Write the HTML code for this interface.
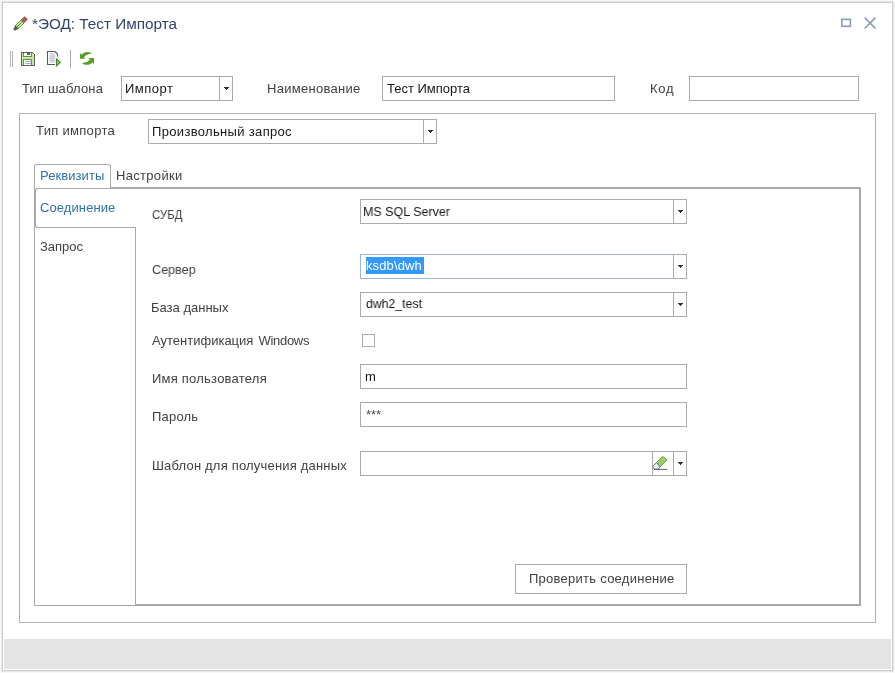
<!DOCTYPE html>
<html lang="ru">
<head>
<meta charset="utf-8">
<title>ЭОД: Тест Импорта</title>
<style>
html,body{margin:0;padding:0;}
body{width:895px;height:673px;overflow:hidden;background:#f9f9f9;position:relative;
 font-family:"Liberation Sans",sans-serif;font-size:13px;color:#414141;}
.abs,.t,.box,.ln{position:absolute;box-sizing:border-box;}
.t{white-space:nowrap;line-height:21px;height:21px;transform-origin:0 50%;will-change:transform;}
.win{left:2px;top:2px;width:891px;height:669px;border:1px solid #cecece;background:#fff;box-shadow:0 0 0 1px #e7e7e7;}
.status{left:4px;top:639px;width:887px;height:30px;background:#e4e4e4;}
.box{border:1px solid #ababab;background:#fff;}
.ln{background:#a9a9a9;}
.dd{position:absolute;right:0;top:0;bottom:0;width:12px;border-left:1px solid #ababab;}
.dd:after{content:"";position:absolute;left:6px;top:12px;width:1px;height:1px;background:#333;box-shadow:-1px -1px #333,0 -1px #333,1px -1px #333,-2px -2px #333,-1px -2px #333,0 -2px #333,1px -2px #333,2px -2px #333;}
.val{color:#161616;}
.blue{color:#3270b0;}
svg{position:absolute;overflow:visible;}
</style>
</head>
<body>
<div class="abs win"></div>
<div class="abs status"></div>

<!-- title bar -->
<svg id="ic-pencil" style="left:14px;top:16px" width="14" height="14" viewBox="0 0 14 14">
 <g transform="translate(0.1,13.9) rotate(-45)">
  <polygon points="-0.2,-1 -0.2,1 4.4,2.4 4.4,-2.4" fill="#4f5f4c"/>
  <rect x="4.2" y="-2.1" width="7.6" height="4.2" fill="#b6ee8e"/>
  <path d="M3.6 -2.1 H11.8 M4 0 H11.8 M3.6 2.1 H11.8" stroke="#3f702c" stroke-width="0.9" stroke-dasharray="1.3 0.4"/>
  <rect x="11.5" y="-2.4" width="5.7" height="4.8" rx="0.9" fill="#a35b5b"/>
 </g>
</svg>
<span class="t" id="title" style="left:31.5px;top:13px;font-size:15.3px;color:#33436b;">*ЭОД: Тест Импорта</span>
<svg id="ic-max" style="left:841px;top:18px" width="11" height="10" viewBox="0 0 11 10">
 <rect x="0.8" y="1.4" width="8.6" height="6.9" fill="none" stroke="#8d9bb5" stroke-width="1.6"/>
</svg>
<svg id="ic-close" style="left:864px;top:17px" width="12" height="12" viewBox="0 0 12 12">
 <path d="M0.7 0.7 L11.5 11.5 M11.5 0.7 L0.7 11.5" stroke="#8d9bb5" stroke-width="1.7" fill="none"/>
</svg>

<!-- toolbar -->
<div class="ln" style="left:10px;top:51px;width:1px;height:16px;background:#b4b4b4"></div>
<div class="ln" style="left:12px;top:51px;width:1px;height:16px;background:#b4b4b4"></div>
<svg id="ic-save" style="left:21px;top:52px" width="14" height="14" viewBox="0 0 14 14">
 <path d="M0.5 0.5 H11.5 L13.5 2.5 V13.5 H0.5 Z" fill="#c6e8a0" stroke="#5a645a" stroke-width="1"/>
 <rect x="2.5" y="0.5" width="8" height="4" fill="#fbfdf8" stroke="#6f8f52" stroke-width="1"/>
 <rect x="6" y="1" width="3" height="2" fill="#56625a"/>
 <rect x="2.5" y="7.5" width="8" height="6" fill="#fbfdf8" stroke="#6f8f52" stroke-width="1"/>
 <path d="M4 9.5 H10 M4 11.5 H10" stroke="#aab2c6" stroke-width="1"/>
 <path d="M0.5 0.5 H11.5 L13.5 2.5 V13.5 H0.5 Z" fill="none" stroke="#5a645a" stroke-width="1"/>
</svg>
<svg id="ic-doc" style="left:47px;top:51px" width="15" height="16" viewBox="0 0 15 16">
 <path d="M10.5 5.8 V3 L8 0.5 H0.5 V13.5 H8" fill="none" stroke="#565b67" stroke-width="1.1"/>
 <rect x="2.3" y="2" width="6.2" height="9.8" fill="#e0dfe9"/>
 <path d="M4 5.2 H7.6 M2.6 7.3 H7.6 M3.2 9.4 H7.2" stroke="#bdbccb" stroke-width="0.9"/>
 <polygon points="9.5,8 13.3,11.4 9.5,14.8" fill="#8fc85e" stroke="#4f8030" stroke-width="1.1" stroke-linejoin="miter"/>
</svg>
<div class="ln" style="left:70px;top:50px;width:1px;height:18px;background:#a8a8a8"></div>
<svg id="ic-refresh" style="left:80px;top:52px" width="14" height="13" viewBox="0 0 14 13">
 <path id="rf" d="M0 0.9 L0 6.8 L5.4 6.8 L3.9 5.3 C5.5 3.2 8.5 2.3 11.9 1.6 C8.5 -0.7 4 -0.4 1.7 2.7 Z" fill="#52a026"/>
 <path d="M0 0.9 L0 6.8 L5.4 6.8 L3.9 5.3 C5.5 3.2 8.5 2.3 11.9 1.6 C8.5 -0.7 4 -0.4 1.7 2.7 Z" fill="#52a026" transform="rotate(180 7 6.45)"/>
</svg>

<!-- row 1 -->
<span class="t" id="l1" style="left:22px;top:78px;letter-spacing:.17px;">Тип шаблона</span>
<div class="box" style="left:121px;top:76px;width:112px;height:25px;"><div class="dd"></div></div>
<span class="t val" id="v1" style="left:125px;top:78px;letter-spacing:.48px;">Импорт</span>
<span class="t" id="l2" style="left:266.5px;top:78px;letter-spacing:.28px;">Наименование</span>
<div class="box" style="left:382px;top:76px;width:233px;height:25px;"></div>
<span class="t val" id="v2" style="left:387px;top:78px;">Тест Импорта</span>
<span class="t" id="l3" style="left:650px;top:78px;letter-spacing:.7px;">Код</span>
<div class="box" style="left:689px;top:76px;width:170px;height:25px;"></div>

<!-- group panel -->
<div class="abs" style="left:19px;top:113px;width:857px;height:510px;border:1px solid #b2b2b2;"></div>
<span class="t" id="l4" style="left:36px;top:120px;letter-spacing:.3px;">Тип импорта</span>
<div class="box" style="left:148px;top:119px;width:289px;height:25px;"><div class="dd"></div></div>
<span class="t val" id="v4" style="left:152px;top:121px;letter-spacing:.33px;">Произвольный запрос</span>

<!-- tab headers -->
<div class="abs" style="left:34px;top:164px;width:77px;height:25px;border:1px solid #a9a9a9;border-bottom:none;border-radius:3px 3px 0 0;background:#fff;"></div>
<span class="t blue" id="tab1" style="left:40px;top:165px;letter-spacing:.07px;">Реквизиты</span>
<span class="t" id="tab2" style="left:116px;top:165px;letter-spacing:.31px;">Настройки</span>

<!-- tab page frame -->
<div class="ln" style="left:110px;top:187px;width:751px;height:2px;"></div>
<div class="ln" style="left:859px;top:187px;width:2px;height:419px;"></div>
<div class="ln" style="left:135px;top:604px;width:726px;height:2px;"></div>
<div class="ln" style="left:34px;top:188px;width:1px;height:418px;"></div>
<div class="ln" style="left:34px;top:605px;width:102px;height:1px;"></div>
<div class="ln" style="left:135px;top:227px;width:1px;height:378px;"></div>
<!-- vertical tabs -->
<div class="abs" style="left:35px;top:188px;width:101px;height:40px;border:1px solid #a9a9a9;border-right:none;border-radius:3px 0 0 3px;"></div>
<span class="t blue" id="vt1" style="left:39.5px;top:197px;letter-spacing:.09px;">Соединение</span>
<span class="t" id="vt2" style="left:39.5px;top:236px;">Запрос</span>

<!-- form labels -->
<span class="t" id="f1" style="left:152px;top:204px;transform:scaleX(.877);">СУБД</span>
<span class="t" id="f2" style="left:152px;top:259px;transform:scaleX(.971);">Сервер</span>
<span class="t" id="f3" style="left:151px;top:297px;">База данных</span>
<span class="t" id="f4" style="left:152px;top:330px;">Аутентификация <span style="letter-spacing:-.3px;margin-left:1.5px">Windows</span></span>
<span class="t" id="f5" style="left:152px;top:368px;letter-spacing:.23px;">Имя пользователя</span>
<span class="t" id="f6" style="left:152px;top:406px;letter-spacing:.2px;">Пароль</span>
<span class="t" id="f7" style="left:152px;top:455px;letter-spacing:.19px;">Шаблон для получения данных</span>

<!-- form fields -->
<div class="box" style="left:360px;top:199px;width:327px;height:25px;"><div class="dd"></div></div>
<span class="t val" id="i1" style="left:363px;top:201px;transform:scaleX(.96);">MS SQL Server</span>

<div class="box" style="left:360px;top:254px;width:327px;height:25px;"><div class="dd"></div></div>
<div class="abs" style="left:360px;top:254px;width:314px;height:25px;border:1px solid #9db5d6;border-right:none;"></div>
<div class="abs" style="left:366px;top:257px;width:58px;height:17px;background:#3399ff;"></div>
<span class="t" id="i2" style="left:366px;top:255px;letter-spacing:.12px;color:#fff;">ksdb\dwh</span>

<div class="box" style="left:360px;top:292px;width:327px;height:25px;"><div class="dd"></div></div>
<span class="t val" id="i3" style="left:366px;top:293px;transform:scaleX(.943);">dwh2_test</span>

<div class="box" style="left:362px;top:334px;width:13px;height:13px;"></div>

<div class="box" style="left:360px;top:364px;width:327px;height:25px;"></div>
<span class="t val" id="i5" style="left:364.5px;top:366px;">m</span>
<div class="box" style="left:360px;top:402px;width:327px;height:25px;"></div>
<span class="t val" id="i6" style="left:365.5px;top:404px;color:#505050;">***</span>

<div class="box" style="left:360px;top:451px;width:327px;height:25px;"><div class="dd"></div>
 <div style="position:absolute;left:291px;top:0;bottom:0;width:1px;background:#ababab;"></div>
</div>
<svg id="ic-eraser" style="left:652px;top:456px" width="16" height="14" viewBox="0 0 16 14">
 <polygon points="10.6,0.5 15,3.7 8.2,10.8 4.5,6.6" fill="#a9da7a" stroke="#5b9737" stroke-width="1"/>
 <polygon points="9.9,2.2 13,4.3 8.2,9.2 5.9,6.6" fill="#93cb62"/>
 <polygon points="4.5,6.6 8.2,10.8 6.3,13.2 2.3,13.2 0.5,10.7" fill="#f1f4fa" stroke="#5a5f69" stroke-width="0.9"/>
 <line x1="2" y1="13.4" x2="15.2" y2="13.4" stroke="#5a5f69" stroke-width="1"/>
</svg>

<div class="box" style="left:515px;top:564px;width:172px;height:30px;"></div>
<span class="t" id="btn" style="left:529px;top:568px;letter-spacing:.26px;">Проверить соединение</span>
</body>
</html>
